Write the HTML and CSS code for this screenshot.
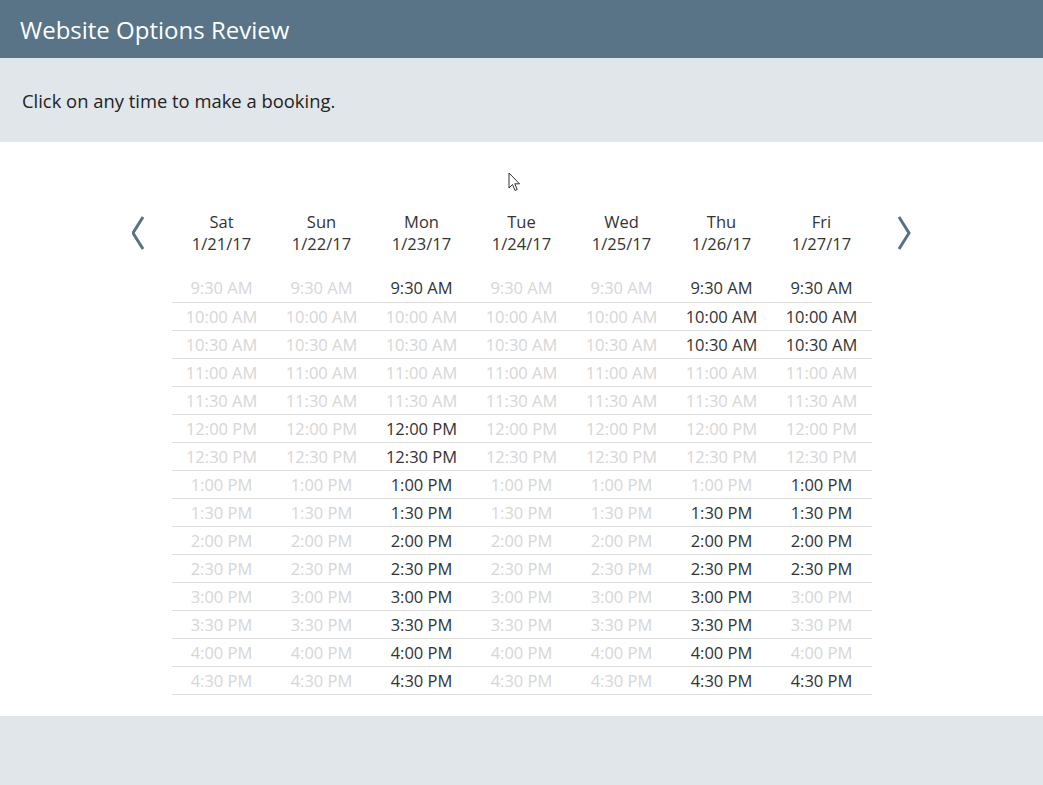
FILE: index.html
```html
<!DOCTYPE html>
<html>
<head>
<meta charset="utf-8">
<title>Website Options Review</title>
<link rel="stylesheet" href="styles.css">
</head>
<body>
<header class="topbar"><h1 class="title">Website Options Review</h1></header>
<section class="intro"><p>Click on any time to make a booking.</p></section>
<main class="content">
  <svg class="cursor" width="14" height="21" viewBox="0 0 14 21"><path d="M1 1 L1 16 L4.5 12.5 L7 18.5 L9.2 17.5 L6.8 11.8 L11.5 11.8 Z" fill="#fff" stroke="#333" stroke-width="1"/></svg>
  <div class="calendar">
    <button class="nav prev"><svg width="16" height="36" viewBox="0 0 16 36"><polyline points="11,2 1,18 11,34" fill="none" stroke="#5a7182" stroke-width="3"/></svg></button>
    <table class="slots">
      <thead>
        <tr><th>Sat<br>1/21/17</th><th>Sun<br>1/22/17</th><th>Mon<br>1/23/17</th><th>Tue<br>1/24/17</th><th>Wed<br>1/25/17</th><th>Thu<br>1/26/17</th><th>Fri<br>1/27/17</th></tr>
      </thead>
      <tbody id="rows"></tbody>
    </table>
    <button class="nav next"><svg width="16" height="36" viewBox="0 0 16 36"><polyline points="3,2 13,18 3,34" fill="none" stroke="#5a7182" stroke-width="3"/></svg></button>
  </div>
</main>
<footer class="bottom"></footer>
<script src="app.js"></script>
</body>
</html>
```
FILE: styles.css
```css
* { box-sizing: border-box; }
body { margin: 0; font-family: "Open Sans", "Noto Sans", sans-serif; color: #333; background: #e1e6ea; }
.topbar { background: #587486; height: 58px; display: flex; align-items: center; padding: 0 20px; }
.title { margin: 0; font-size: 24px; font-weight: 400; color: #fff; }
.intro { background: #e1e6ea; height: 84px; display: flex; align-items: center; padding: 0 22px; }
.intro p { margin: 0; font-size: 18.4px; color: #222; }
.content { background: #fff; padding: 69px 0 21px; position: relative; }
.cursor { position: absolute; left: 508px; top: 30px; }
.calendar { display: flex; justify-content: center; align-items: flex-start; }
.nav { width: 28px; padding: 0; margin: 4px 0 0; border: 0; background: none; display: flex; }
.prev { justify-content: flex-start; margin-right: 12px; }
.next { justify-content: flex-end; margin-left: 12px; }
.slots { border-collapse: collapse; width: 700px; table-layout: fixed; }
.slots th { font-weight: 400; font-size: 16.5px; line-height: 22px; width: 100px; padding: 0 0 19px; color: #333; text-align: center; }
.slots td { height: 28px; padding: 0; text-align: center; font-size: 16.5px; border-bottom: 1px solid #dedede; color: #333; }
.slots td.off { color: #d6d6d6; }
.bottom { height: 69px; background: #e1e6ea; }
```
FILE: app.js
```js
const times = ["9:30 AM","10:00 AM","10:30 AM","11:00 AM","11:30 AM","12:00 PM","12:30 PM","1:00 PM","1:30 PM","2:00 PM","2:30 PM","3:00 PM","3:30 PM","4:00 PM","4:30 PM"];
const avail = {
  2: [1,0,0,0,0,1,1,1,1,1,1,1,1,1,1],
  5: [1,1,1,0,0,0,0,0,1,1,1,1,1,1,1],
  6: [1,1,1,0,0,0,0,1,1,1,1,0,0,0,1]
};
const tbody = document.getElementById("rows");
times.forEach((t, i) => {
  const tr = document.createElement("tr");
  for (let d = 0; d < 7; d++) {
    const td = document.createElement("td");
    td.textContent = t;
    if (!(avail[d] && avail[d][i])) td.className = "off";
    tr.appendChild(td);
  }
  tbody.appendChild(tr);
});
```
